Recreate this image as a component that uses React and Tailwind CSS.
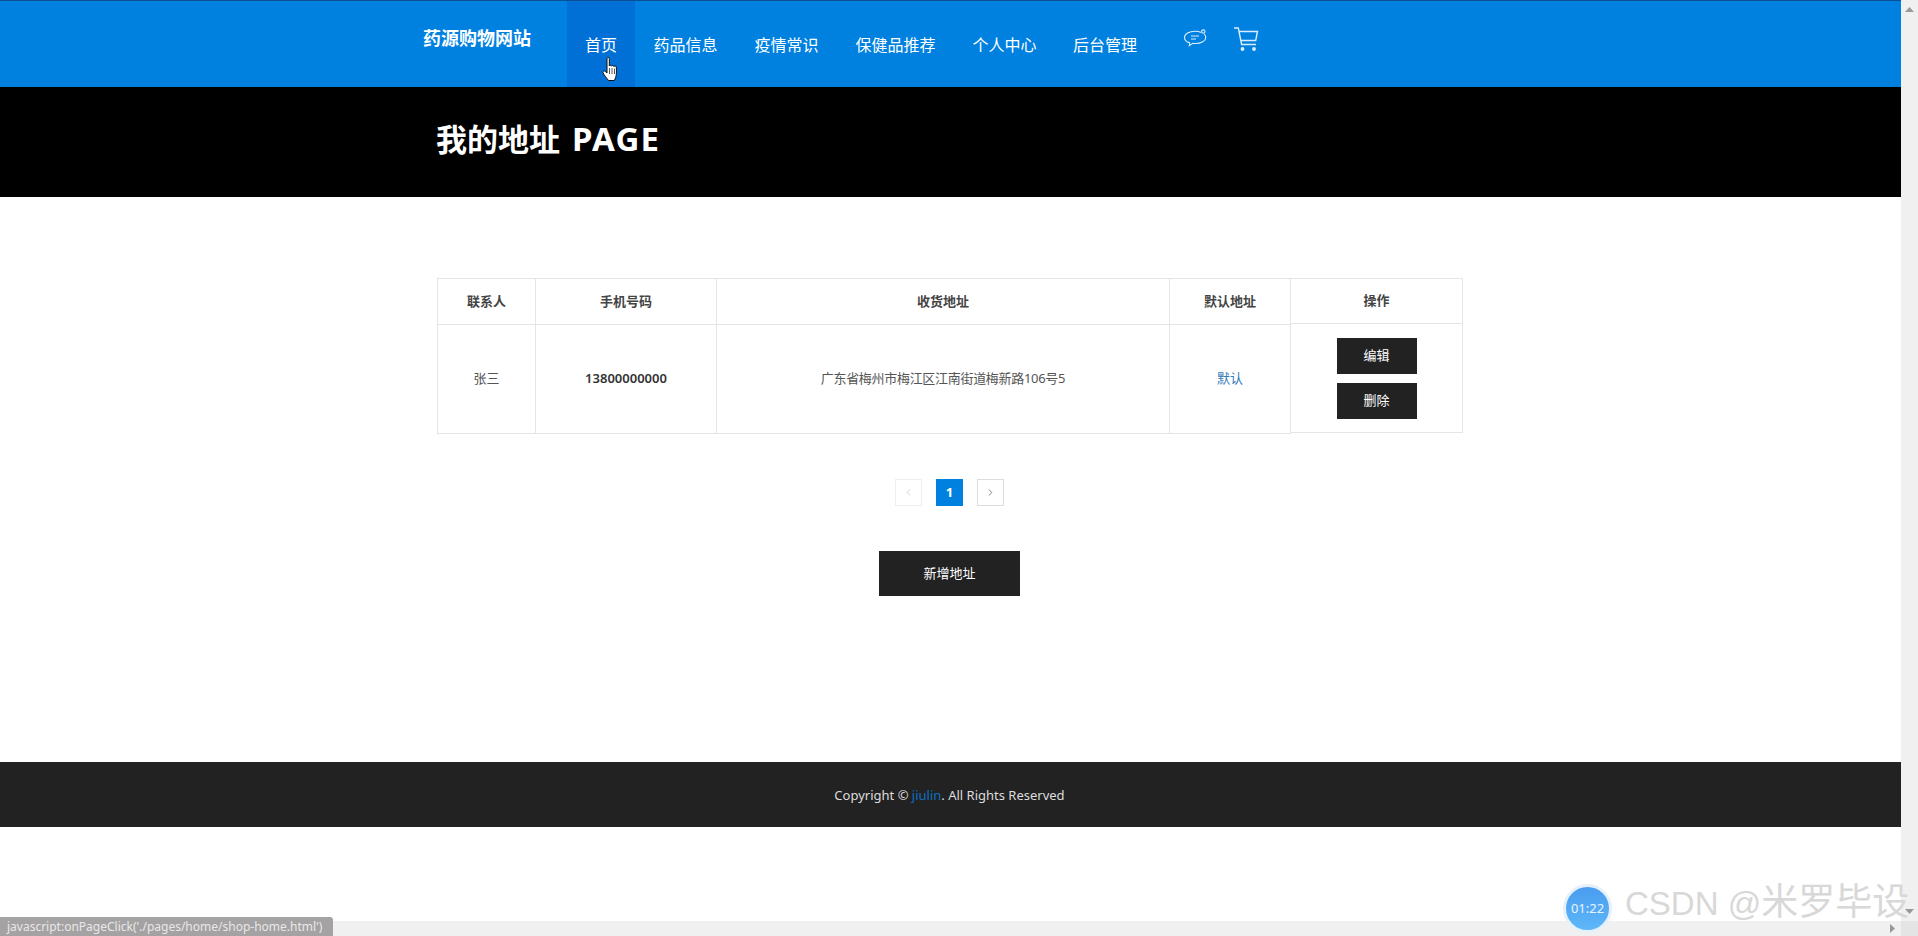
import React from 'react';
import { ChevronLeft, ChevronRight } from 'lucide-react';

const navItems = ['首页', '药品信息', '疫情常识', '保健品推荐', '个人中心', '后台管理'];
const navWidths = ['w-[68px]', 'w-[101px]', 'w-[101px]', 'w-[117px]', 'w-[101px]', 'w-[100px]'];

const ChatIcon = () => (
  <svg width="24" height="20" viewBox="0 0 24 20" fill="none" stroke="#dbeeff" strokeWidth="1.1">
    <path d="M18 3.6C16.4 2.7 14.2 2.3 12 2.3 6.2 2.3 1.5 4.9 1.5 8.4c0 2.5 2.2 4.5 5.2 5.4l-.4 2.8 3.5-2.3c.9.1 1.8.2 2.7.2 5.7 0 10.3-2.7 10.3-6.1 0-1.2-.6-2.3-1.6-3.2" />
    <circle cx="20.3" cy="2.6" r="1.7" />
    <path d="M8 7h8M8 10h5" />
  </svg>
);

const CartIcon = () => (
  <svg width="26" height="27" viewBox="0 0 26 27" fill="none" stroke="#dbeeff" strokeWidth="1.4">
    <path d="M1 2h4.3l3.3 16.5h14.4" />
    <path d="M6 5.500h18.500l-1.800 9H8" />
    <circle cx="9.500" cy="23" r="1.200" fill="#dbeeff" />
    <circle cx="21" cy="23" r="1.200" fill="#dbeeff" />
  </svg>
);

const HandCursor = () => (
  <svg className="absolute left-[35px] top-[56px]" width="18" height="25" viewBox="0 0 18 25">
    <path
      d="M5 1.500c0-1.300 2.300-1.300 2.300 0V9c.2-1 2.200-1 2.300.2.200-1 2.200-1 2.300.3.300-.9 2.300-.8 2.400.6.200 2.500.3 5 0 7.500-.2 2.300-1 4.400-2 5.900H6.500C5 21.500 1.500 17.500 1 15.500c-.3-1.300 1.200-2 2.200-1.100L5 16V1.500z"
      fill="#fff"
      stroke="#111"
      strokeWidth="1"
    />
    <path d="M7.500 11v6M10 11v6M12.500 11.500v5.500" stroke="#111" strokeWidth="0.7" />
  </svg>
);

function Column({ title, headClass, bodyClass, children, widthClass }) {
  return (
    <div className={`flex flex-col border-l border-[#e5e5e5] ${widthClass}`}>
      <div className={`flex items-center justify-center border-b border-[#e5e5e5] text-[13px] font-semibold text-[#444] ${headClass || 'h-[46px]'}`}>
        {title}
      </div>
      <div className={`flex items-center justify-center text-[13px] ${bodyClass}`}>{children}</div>
    </div>
  );
}

export default function App() {
  return (
    <div className="relative h-[936px] w-[1918px] overflow-hidden bg-white font-['Noto_Sans','Noto_Sans_CJK_SC',sans-serif]">
      <div className="flex h-[921px]">
        <div className="flex w-[1901px] flex-col">
          <header className="h-[87px] border-t border-[#0d4f94] bg-[#0081df]">
            <div className="flex pl-[423px]">
              <div className="w-[144px] pt-[25px] text-[18px] leading-[24px] font-bold text-white">药源购物网站</div>
              <nav className="flex">
                {navItems.map((item, i) => (
                  <a
                    key={item}
                    className={`relative flex h-[86px] items-start justify-center pt-[32px] text-[16px] leading-[24px] text-white ${navWidths[i]} ${i === 0 ? 'bg-[#006fd6]' : ''}`}
                  >
                    {item}
                    {i === 0 && <HandCursor />}
                  </a>
                ))}
              </nav>
              <div className="ml-[28px] flex items-start gap-[26px]">
                <div className="pt-[28px]"><ChatIcon /></div>
                <div className="pt-[25px]"><CartIcon /></div>
              </div>
            </div>
          </header>

          <section className="flex h-[110px] items-center bg-black pl-[436px]">
            <h1 className="pb-[6px] text-[31px] leading-[40px] font-bold text-white">
              我的地址 <span className="ml-[4px] text-[33px] tracking-[1.2px]">PAGE</span>
            </h1>
          </section>

          <main className="flex h-[565px] flex-col pt-[81px] pl-[437px]">
            <div className="flex w-[1026px] flex-col items-center pr-[1px]">
              <div className="-mr-[1px] flex h-[156px] w-[1026px] items-start">
                <div className="flex h-[156px] border-y border-r border-[#e5e5e5]">
                  <Column title="联系人" widthClass="w-[98px]" bodyClass="flex-1 text-[#555]">张三</Column>
                  <Column title="手机号码" widthClass="w-[181px]" bodyClass="flex-1 font-semibold text-[#333]">13800000000</Column>
                  <Column title="收货地址" widthClass="w-[453px]" bodyClass="flex-1 tracking-[-0.3px] text-[#555]">广东省梅州市梅江区江南街道梅新路106号5</Column>
                  <Column title="默认地址" widthClass="w-[121px]" bodyClass="flex-1 text-[#337ab7]">默认</Column>
                </div>
                <div className="h-[155px] border-y border-r border-[#e5e5e5]">
                  <Column title="操作" widthClass="w-[171px] h-full border-l-0" headClass="h-[45px]" bodyClass="flex-1 flex-col gap-[9px]">
                    <button className="h-[36px] w-[80px] bg-[#222] text-[13px] text-white">编辑</button>
                    <button className="h-[36px] w-[80px] bg-[#222] text-[13px] text-white">删除</button>
                  </Column>
                </div>
              </div>

              <div className="mt-[45px] flex gap-[14px]">
                <span className="flex h-[27px] w-[27px] items-center justify-center border border-[#eeeeee] text-[#ccc]"><ChevronLeft size={11} /></span>
                <span className="flex h-[27px] w-[27px] items-center justify-center bg-[#0081df] text-[13px] font-bold text-white">1</span>
                <span className="flex h-[27px] w-[27px] items-center justify-center border border-[#dddddd] text-[#777]"><ChevronRight size={11} /></span>
              </div>

              <button className="mt-[45px] h-[45px] w-[141px] bg-[#222] text-[13px] text-white">新增地址</button>
            </div>
          </main>

          <footer className="flex h-[65px] items-center justify-center bg-[#222] pt-[2px] pr-[2px] text-[13px] text-[#ddd]">
            <span>Copyright © <a className="text-[#0d6fc4]">jiulin</a>. All Rights Reserved</span>
          </footer>
        </div>

        <div className="flex w-[17px] flex-col items-center justify-between bg-[#f0f0f0] py-[7px]">
          <svg width="9" height="5" viewBox="0 0 9 5"><path d="M4.500 0L9 5H0z" fill="#999" /></svg>
          <svg width="9" height="5" viewBox="0 0 9 5"><path d="M0 0h9L4.500 5z" fill="#999" /></svg>
        </div>
      </div>

      <div className="flex h-[15px]">
        <div className="flex w-[1901px] items-center justify-end bg-[#f0f0f0] pr-[6px]">
          <svg width="5" height="9" viewBox="0 0 5 9"><path d="M0 0l5 4.500L0 9z" fill="#999" /></svg>
        </div>
        <div className="w-[17px] bg-[#e4e4e4]" />
      </div>

      <div className="absolute bottom-0 left-0 flex h-[19px] w-[333px] items-center rounded-tr-[3px] bg-[#a5a2a3] pl-[7px] text-[12px] whitespace-nowrap text-[#e8e8e8]">
        javascript:onPageClick('./pages/home/shop-home.html')
      </div>

      <div className="absolute left-[1563px] top-[884px] flex h-[49px] w-[49px] items-center justify-center rounded-full border-[3px] border-[#e6f0fb] bg-gradient-to-b from-[#4a9cf0] to-[#5db8f8] text-[13px] text-[#eaf5ff]">
        01:22
      </div>
      <div className="absolute left-[1625px] top-[878px] font-['Liberation_Sans','Noto_Sans_CJK_SC',sans-serif] text-[33px] leading-[50px] whitespace-nowrap text-[#d8d8d8]">
        CSDN @<span className="text-[37px]">米罗毕设</span>
      </div>
    </div>
  );
}
